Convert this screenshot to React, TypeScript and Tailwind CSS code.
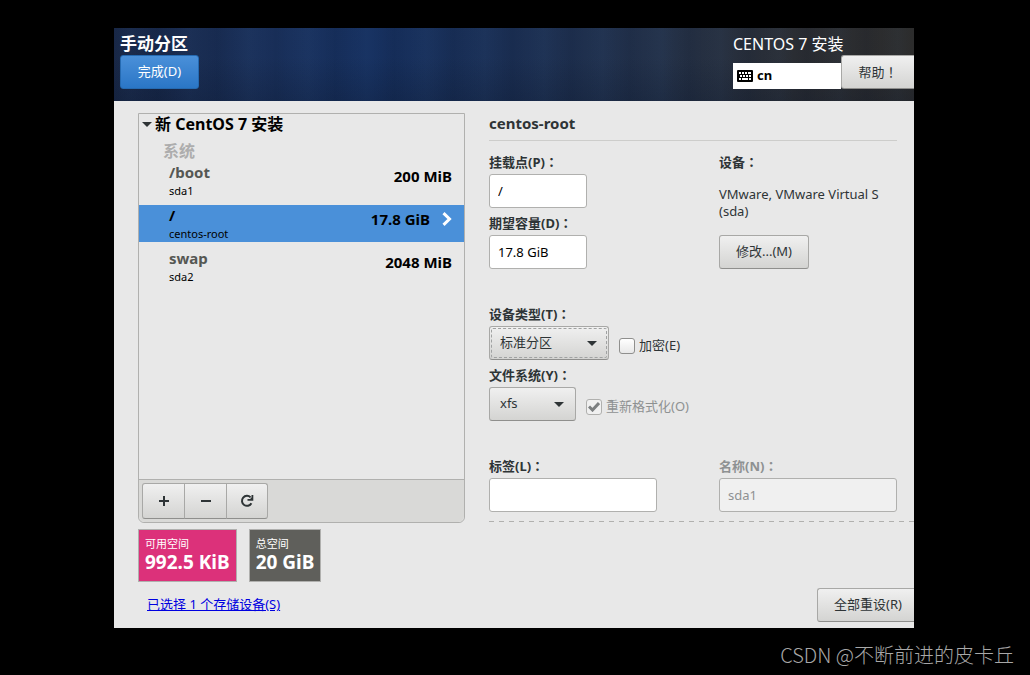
// src/App.tsx
import { useState } from "react";
import type { ReactNode } from "react";

// --- Types ---

type Partition = {
    mount: string;
    device: string;
    size: string;
};

// --- Data ---

const partitions: Partition[] = [
    { mount: "/boot", device: "sda1", size: "200 MiB" },
    { mount: "/", device: "centos-root", size: "17.8 GiB" },
    { mount: "swap", device: "sda2", size: "2048 MiB" },
];

const buttonLook =
    "border border-[#a8a8a6] border-b-[#8f8f8d] bg-linear-to-b from-[#f0f0f0] to-[#d4d4d2] text-[#2e3436]";
const inputLook =
    "block h-[34px] rounded-[3px] border border-[#b0b0ae] bg-white px-2 text-[13px] text-black outline-none";

// --- Small parts ---

// Full-width punctuation, centred in its cell
function Mark({ children }: { children: ReactNode }) {
    return <span className="font-['Noto_Sans_CJK_TC',sans-serif]">{children}</span>;
}

function FieldLabel({ htmlFor, muted, children }: { htmlFor?: string; muted?: boolean; children: ReactNode }) {
    return (
        <label
            htmlFor={htmlFor}
            className={`mb-0.5 block h-5 text-[13px] leading-5 font-bold ${muted ? "text-[#8e9192]" : "text-[#2e3436]"}`}
        >
            {children}
            <Mark>：</Mark>
        </label>
    );
}

function Combo({ id, value, className }: { id: string; value: string; className: string }) {
    return (
        <div className={`relative h-[34px] ${className}`}>
            <select
                id={id}
                defaultValue={value}
                className={`h-full w-full appearance-none rounded-[3px] pl-2.5 text-[13px] outline-none ${buttonLook}`}
            >
                <option value={value}>{value}</option>
            </select>
            <svg viewBox="0 0 10 5" className="pointer-events-none absolute top-[15px] right-3 h-[5px] w-2.5 fill-[#2e3436]">
                <path d="M0 0h10L5 5z" />
            </svg>
        </div>
    );
}

function KeyboardIcon() {
    return (
        <svg viewBox="0 0 16 12" className="h-3 w-4">
            <rect width="16" height="12" rx="1" fill="#000" />
            <path
                d="M2 3h2M5 3h2M8 3h2M11 3h3M3 6h2M6 6h2M9 6h2M12 6h2M2 9h2M5 9h6M12 9h2"
                stroke="#fff"
                strokeWidth="2"
            />
        </svg>
    );
}

// --- Page ---

export default function App() {
    const [selected, setSelected] = useState("/");
    const [encrypt, setEncrypt] = useState(false);

    return (
        <div className="flex min-h-screen flex-col bg-black pt-7 font-['Noto_Sans','Noto_Sans_CJK_SC',sans-serif] text-[13px]">
            <div className="mr-[116px] ml-[114px] overflow-hidden bg-[#e8e8e8]">
                {/* Top bar */}
                <header className="flex h-[73px] justify-between bg-[linear-gradient(to_bottom,transparent_40%,rgba(10,20,40,0.25)),repeating-linear-gradient(90deg,transparent_0,rgba(90,140,200,0.04)_17px,transparent_31px,rgba(0,10,30,0.08)_44px,transparent_59px),linear-gradient(90deg,#182746_0%,#1a315c_20%,#16305f_32%,#1b2f53_50%,#233149_68%,#2a2d33_85%,#2c2c2c_100%)] pt-1.5 text-white">
                    <div className="pl-1.5">
                        <h1 className="h-[21px] text-[17px] leading-5 font-bold">手动分区</h1>
                        <button className="block h-[34px] w-[79px] rounded-[3px] border border-[#256ab1] bg-linear-to-b from-[#4a90d9] to-[#2a76c6] text-[13px] text-white">
                            完成(D)
                        </button>
                    </div>
                    <div>
                        <p className="h-[21px] text-base leading-5">CENTOS 7 安装</p>
                        <div className="flex">
                            <div className="mt-2 flex h-[26px] w-[108px] items-center gap-1 bg-white pl-1 text-[13px] font-bold text-black">
                                <KeyboardIcon />
                                cn
                            </div>
                            <button className={`h-[34px] w-[73px] rounded-l-[3px] border-r-0 text-[13px] ${buttonLook}`}>
                                帮助<Mark>！</Mark>
                            </button>
                        </div>
                    </div>
                </header>

                <main className="flex pt-3 pl-6">
                    {/* Partition list */}
                    <section className="w-[327px] shrink-0">
                        <div className="flex h-[410px] flex-col rounded-b-md border border-[#b0b0ae]">
                            <div className="flex-1">
                                <h2 className="flex h-5 items-center gap-[3px] pl-[3px] text-base leading-5 font-bold text-black">
                                    <svg viewBox="0 0 10 5" className="h-[5px] w-2.5 fill-[#2e3436]">
                                        <path d="M0 0h10L5 5z" />
                                    </svg>
                                    新 CentOS 7 安装
                                </h2>
                                <h3 className="mt-[7px] mb-px h-5 pl-6 text-base leading-5 font-bold text-[#adadad]">系统</h3>
                                <div className="flex flex-col gap-1.5">
                                    {partitions.map((p) => {
                                        const active = p.mount === selected;
                                        return (
                                            <button
                                                key={p.mount}
                                                onClick={() => setSelected(p.mount)}
                                                className={`flex h-[37px] items-start pr-3 pl-[30px] text-left text-black ${active ? "bg-[#4a90d9]" : ""}`}
                                            >
                                                <span className="flex-1">
                                                    <span className={`block h-5 text-[15px] leading-5 font-bold ${active ? "text-black" : "text-[#555753]"}`}>
                                                        {p.mount}
                                                    </span>
                                                    <span className="block h-4 text-[11px] leading-[18px]">{p.device}</span>
                                                </span>
                                                <span className="flex h-7 items-center text-[15px] font-bold">
                                                    {p.size}
                                                    {active && (
                                                        <svg viewBox="0 0 10 14" className="ml-3 h-3.5 w-2.5 fill-none stroke-white stroke-3">
                                                            <path d="M1.5 1.2 7.5 7l-6 5.8" />
                                                        </svg>
                                                    )}
                                                </span>
                                            </button>
                                        );
                                    })}
                                </div>
                            </div>
                            <div className="flex h-[43px] rounded-b-md border-t border-[#b0b0ae] bg-[#d9d9d7] p-[3px]">
                                <button aria-label="添加" className={`grid h-9 w-[43px] place-items-center rounded-l-[3px] ${buttonLook}`}>
                                    <svg viewBox="0 0 10 10" className="size-2.5 stroke-[#2e3436] stroke-2">
                                        <path d="M5 0v10M0 5h10" />
                                    </svg>
                                </button>
                                <button aria-label="删除" className={`-ml-px grid h-9 w-[43px] place-items-center ${buttonLook}`}>
                                    <svg viewBox="0 0 10 10" className="size-2.5 stroke-[#2e3436] stroke-2">
                                        <path d="M0 5h10" />
                                    </svg>
                                </button>
                                <button aria-label="刷新" className={`-ml-px grid h-9 w-[42px] place-items-center rounded-r-[3px] ${buttonLook}`}>
                                    <svg viewBox="0 0 14 14" className="size-3.5">
                                        <path d="M10.6 3.4A5 5 0 1 0 11.4 9.2" fill="none" stroke="#2e3436" strokeWidth="2" />
                                        <path d="M13.3 1v5.8H7.5V5h2.6l1.4-1.6V1z" fill="#2e3436" />
                                    </svg>
                                </button>
                            </div>
                        </div>

                        {/* Free / total space */}
                        <div className="mt-1.5 flex gap-3 text-white">
                            <div className="h-[53px] border border-[#b0b0ae] bg-[#dc317a] px-1.5 pt-1.5">
                                <p className="h-4 text-[11px] leading-4">可用空间</p>
                                <p className="text-[19px] leading-5 font-bold">992.5 KiB</p>
                            </div>
                            <div className="h-[53px] border border-[#b0b0ae] bg-[#5f5f5b] px-1.5 pt-1.5">
                                <p className="h-4 text-[11px] leading-4">总空间</p>
                                <p className="text-[19px] leading-5 font-bold">20 GiB</p>
                            </div>
                        </div>
                    </section>

                    {/* Details of the selected partition */}
                    <section className="ml-6 flex-1 text-[#2e3436]">
                        <h2 className="mr-[17px] h-7 border-b border-[#cdcdcb] text-[15px] leading-5 font-bold">centos-root</h2>
                        <div className="mt-[11px] mr-[17px] flex">
                            <div className="w-[230px]">
                                <FieldLabel htmlFor="mount">挂载点(P)</FieldLabel>
                                <input id="mount" defaultValue="/" className={`w-[98px] ${inputLook}`} />
                                <div className="mt-[5px]">
                                    <FieldLabel htmlFor="size">期望容量(D)</FieldLabel>
                                    <input id="size" defaultValue="17.8 GiB" className={`w-[98px] ${inputLook}`} />
                                </div>
                            </div>
                            <div className="flex-1">
                                <p className="h-5 text-[13px] leading-5 font-bold">
                                    设备<Mark>：</Mark>
                                </p>
                                <p className="mt-3.5 mb-[15px] text-[13px] leading-[17px]">
                                    VMware, VMware Virtual S
                                    <br />
                                    (sda)
                                </p>
                                <button className={`h-[34px] w-[90px] rounded-[3px] text-[13px] ${buttonLook}`}>修改...(M)</button>
                            </div>
                        </div>

                        <div className="mt-[35px]">
                            <FieldLabel htmlFor="type">设备类型(T)</FieldLabel>
                            <div className="flex items-center gap-2.5">
                                <div className="relative">
                                    <Combo id="type" value="标准分区" className="w-[120px]" />
                                    <span className="pointer-events-none absolute inset-0.5 rounded-xs border border-dashed border-[#a0a2a2]" />
                                </div>
                                <label className="flex items-center gap-1 pt-1.5">
                                    <input
                                        type="checkbox"
                                        checked={encrypt}
                                        onChange={(e) => setEncrypt(e.target.checked)}
                                        className="size-4 appearance-none rounded-[3px] border border-[#8f8f8d] bg-linear-to-b from-white to-[#e8e8e8] checked:bg-[#4a90d9]"
                                    />
                                    加密(E)
                                </label>
                            </div>
                        </div>
                        <div className="mt-[5px]">
                            <FieldLabel htmlFor="fs">文件系统(Y)</FieldLabel>
                            <div className="flex items-center gap-2.5">
                                <Combo id="fs" value="xfs" className="w-[87px]" />
                                <label className="relative flex items-center gap-1 pt-1.5 text-[#8e9192]">
                                    <input
                                        type="checkbox"
                                        checked
                                        disabled
                                        className="size-4 appearance-none rounded-[3px] border border-[#b0b0ae] bg-[#f0f0f0]"
                                    />
                                    <svg viewBox="0 0 12 10" className="pointer-events-none absolute left-0.5 h-2.5 w-3 fill-none stroke-[#7c7f80] stroke-3">
                                        <path d="M1 4.5 4.5 8 11 1" />
                                    </svg>
                                    重新格式化(O)
                                </label>
                            </div>
                        </div>

                        <div className="mt-[35px] mr-[17px] flex">
                            <div className="w-[230px]">
                                <FieldLabel htmlFor="label">标签(L)</FieldLabel>
                                <input id="label" className={`w-[168px] ${inputLook}`} />
                            </div>
                            <div className="flex-1">
                                <FieldLabel htmlFor="name" muted>名称(N)</FieldLabel>
                                <input
                                    id="name"
                                    disabled
                                    defaultValue="sda1"
                                    className="block h-[34px] w-full rounded-[3px] border border-[#b0b0ae] bg-[#f0f0f0] px-2 text-[13px] text-[#8e9192]"
                                />
                            </div>
                        </div>
                        <div className="mt-[9px] h-px bg-[repeating-linear-gradient(90deg,#b0b0ae_0_5px,transparent_5px_10px)]" />
                    </section>
                </main>

                <footer className="flex items-center justify-between pt-1.5 pb-1.5 pl-[33px]">
                    <a href="#storage" className="text-[13px] text-[#0000e0] underline">
                        已选择 1 个存储设备(S)
                    </a>
                    <button className={`h-[34px] w-[97px] rounded-l-[3px] border-r-0 pl-1 text-[13px] ${buttonLook}`}>全部重设(R)</button>
                </footer>
            </div>

            <p className="mt-3 pr-4 text-right font-['Noto_Sans_CJK_SC',sans-serif] text-xl leading-[30px] font-light text-[#a8a8a8]">
                CSDN @不断前进的皮卡丘
            </p>
        </div>
    );
}
